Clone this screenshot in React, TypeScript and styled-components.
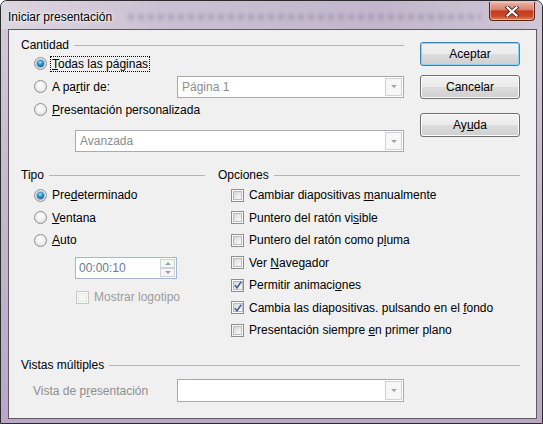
import React from "react";
import styled, { createGlobalStyle } from "styled-components";

const GlobalStyle = createGlobalStyle`
  html, body {
    margin: 0;
    padding: 0;
    background: #ffffff;
  }
  * {
    box-sizing: border-box;
  }
`;

const FONT = `"Liberation Sans", Arial, sans-serif`;

const Window = styled.div`
  width: 543px;
  height: 424px;
  border: 1px solid #2b2b2b;
  border-radius: 7px 7px 0 0;
  background: linear-gradient(to bottom, #d3cad9 0%, #c4b8cc 50%, #b8a8c5 100%);
  display: flex;
  flex-direction: column;
  font-family: ${FONT};
  font-size: 12px;
  color: #000;
  overflow: hidden;
`;

const TitleBar = styled.div`
  height: 28px;
  display: flex;
  align-items: flex-start;
  padding-left: 7px;
  background: linear-gradient(to right, #dcd6e0 0%, #cbc0d3 30%, #c3b6cc 70%, #d0c6d6 100%);
`;

const Title = styled.div`
  height: 28px;
  line-height: 28px;
  padding-top: 2px;
  text-shadow: 0 0 6px #ffffff, 0 0 3px #ffffff;
  white-space: nowrap;
`;

const Blur = styled.div`
  flex: 1;
  height: 14px;
  margin: 9px 8px 0 14px;
  background-image: radial-gradient(circle, rgba(100, 82, 122, 0.32) 0, rgba(100, 82, 122, 0) 5px);
  background-size: 10px 14px;
  filter: blur(1.6px);
`;

const CloseButton = styled.div`
  width: 46px;
  height: 19px;
  margin: 1px 7px 0 0;
  border: 1px solid #5a2418;
  border-top: none;
  border-radius: 0 0 4px 4px;
  background: linear-gradient(to bottom, #e9b1a4 0%, #dc8570 40%, #c43b1f 52%, #cc4b2b 80%, #e3895e 100%);
  box-shadow: inset 0 0 0 1px rgba(255, 210, 200, 0.55);
  display: flex;
  align-items: center;
  justify-content: center;
`;

const Client = styled.div`
  flex: 1;
  margin: 0 5px 4px 7px;
  border: 1px solid #5e5a63;
  background: #f0f0f0;
  padding: 7px 16px 0 12px;
  display: flex;
  flex-direction: column;
`;

const Row = styled.div<{ $gap?: number; $mt?: number }>`
  display: flex;
  gap: ${(p) => p.$gap ?? 0}px;
  margin-top: ${(p) => p.$mt ?? 0}px;
`;

const Group = styled.div<{ $w?: number }>`
  display: flex;
  flex-direction: column;
  width: ${(p) => (p.$w ? `${p.$w}px` : "auto")};
  flex: ${(p) => (p.$w ? "none" : 1)};
`;

const Header = styled.div`
  height: 15px;
  display: flex;
  align-items: center;
  gap: 5px;
  white-space: nowrap;
`;

const HeaderLine = styled.div`
  flex: 1;
  height: 1px;
  background: #b4b4b4;
  margin-top: 1px;
`;

const Items = styled.div<{ $mt?: number; $indent?: number }>`
  display: flex;
  flex-direction: column;
  margin-top: ${(p) => p.$mt ?? 0}px;
  padding-left: ${(p) => p.$indent ?? 13}px;
`;

const OptionRow = styled.div<{ $h?: number }>`
  height: ${(p) => p.$h ?? 22.5}px;
  display: flex;
  align-items: center;
  white-space: nowrap;
`;

const RadioCircle = styled.span<{ $checked?: boolean }>`
  width: 13px;
  height: 13px;
  flex: none;
  border-radius: 50%;
  border: 1px solid #8c8e90;
  background: radial-gradient(circle at 50% 40%, #ffffff 0%, #f1f1f1 45%, #d5d6d8 100%);
  display: flex;
  align-items: center;
  justify-content: center;
  margin-right: 4px;

  &::after {
    content: "";
    display: ${(p) => (p.$checked ? "block" : "none")};
    width: 7px;
    height: 7px;
    border-radius: 50%;
    background: radial-gradient(circle at 45% 35%, #b5ecff 0%, #2f9ad8 35%, #13558c 80%, #0d3e68 100%);
    box-shadow: 0 0 0 1px rgba(40, 80, 120, 0.35);
  }
`;

const Label = styled.span<{ $focus?: boolean; $disabled?: boolean }>`
  color: ${(p) => (p.$disabled ? "#9c9c9c" : "#000")};
  padding: 1px 1px;
  margin-left: -1px;
  border: 1px dotted ${(p) => (p.$focus ? "#000" : "transparent")};
  line-height: 12px;
`;

const Box = styled.span<{ $disabled?: boolean }>`
  width: 13px;
  height: 13px;
  flex: none;
  border: 1px solid ${(p) => (p.$disabled ? "#c7c7c7" : "#8c8e90")};
  padding: 1px;
  background: #fbfbfb;
  margin-right: 4px;
  display: flex;
`;

const BoxInner = styled.span<{ $disabled?: boolean }>`
  flex: 1;
  border: 1px solid ${(p) => (p.$disabled ? "#e6e6e6" : "#b9bbbe")};
  background: ${(p) =>
    p.$disabled ? "#f6f6f6" : "linear-gradient(135deg, #d4d5d7 0%, #ececed 55%, #fbfbfb 100%)"};
  display: flex;
  align-items: center;
  justify-content: center;
`;

const Combo = styled.div<{ $w?: number }>`
  width: ${(p) => (p.$w ? `${p.$w}px` : "auto")};
  flex: ${(p) => (p.$w ? "none" : 1)};
  height: 22px;
  border: 1px solid #a7abb0;
  background: #ffffff;
  display: flex;
  align-items: center;
  padding: 1px;
  color: #8d8d8d;
`;

const ComboText = styled.span`
  flex: 1;
  padding-left: 3px;
`;

const DropButton = styled.span`
  width: 17px;
  height: 100%;
  border: 1px solid #d3d3d3;
  background: #f7f7f7;
  display: flex;
  align-items: center;
  justify-content: center;

  &::after {
    content: "";
    border-left: 3px solid transparent;
    border-right: 3px solid transparent;
    border-top: 3px solid #a2a2a2;
  }
`;

const Spin = styled.div`
  width: 102px;
  height: 22px;
  border: 1px solid #a5b7d0;
  background: #ffffff;
  display: flex;
  align-items: center;
  padding: 1px 1px 1px 0;
  color: #6d7a8e;
`;

const SpinButtons = styled.div`
  width: 15px;
  height: 100%;
  display: flex;
  flex-direction: column;
`;

const SpinHalf = styled.span<{ $up?: boolean }>`
  flex: 1;
  border: 1px solid #cfd3d8;
  background: #f6f6f6;
  display: flex;
  align-items: center;
  justify-content: center;

  &::after {
    content: "";
    border-left: 3px solid transparent;
    border-right: 3px solid transparent;
    ${(p) => (p.$up ? "border-bottom: 3px solid #a0a0a0;" : "border-top: 3px solid #a0a0a0;")}
  }
`;

const ButtonColumn = styled.div`
  width: 100px;
  display: flex;
  flex-direction: column;
  padding-top: 5px;
`;

const Button = styled.button<{ $default?: boolean; $mt?: number }>`
  width: 100px;
  height: 24px;
  margin-top: ${(p) => p.$mt ?? 0}px;
  font-family: ${FONT};
  font-size: 12px;
  color: #000;
  border: 1px solid ${(p) => (p.$default ? "#3c7fb1" : "#707070")};
  border-radius: 3px;
  background: linear-gradient(to bottom, #f2f2f2 0%, #ebebeb 49%, #dddddd 50%, #cfcfcf 100%);
  box-shadow: inset 0 0 0 1px ${(p) => (p.$default ? "#8fd3f5" : "#fbfbfb")};
  padding: 0;
`;

const GreyText = styled.span`
  color: #8e8e8e;
  width: 144px;
  white-space: nowrap;
`;

function Radio({ checked, children, focus }: { checked?: boolean; children: React.ReactNode; focus?: boolean }) {
  return (
    <>
      <RadioCircle $checked={checked} />
      <Label $focus={focus}>{children}</Label>
    </>
  );
}

function Check({
  checked,
  disabled,
  children,
}: {
  checked?: boolean;
  disabled?: boolean;
  children: React.ReactNode;
}) {
  return (
    <>
      <Box $disabled={disabled}>
        <BoxInner $disabled={disabled}>
          {checked && (
            <svg width="8" height="8" viewBox="0 0 8 8">
              <path d="M0.8 4.2 L3 6.8 L7.2 0.8" fill="none" stroke="#4a5e99" strokeWidth="1.6" />
            </svg>
          )}
        </BoxInner>
      </Box>
      <Label $disabled={disabled}>{children}</Label>
    </>
  );
}

export default function App() {
  return (
    <>
      <GlobalStyle />
      <Window>
        <TitleBar>
          <Title>Iniciar presentación</Title>
          <Blur />
          <CloseButton>
            <svg width="14" height="11" viewBox="0 0 14 11">
              <path d="M2.5 1.5 L11.5 9.5 M11.5 1.5 L2.5 9.5" stroke="#4a2a24" strokeWidth="4" strokeLinecap="square" />
              <path d="M2.5 1.5 L11.5 9.5 M11.5 1.5 L2.5 9.5" stroke="#ffffff" strokeWidth="2.2" strokeLinecap="square" />
            </svg>
          </CloseButton>
        </TitleBar>
        <Client>
          <Row $gap={16}>
            <Group>
              <Header>
                Cantidad
                <HeaderLine />
              </Header>
              <Items>
                <OptionRow $h={23}>
                  <Radio checked focus>
                    <u>T</u>odas las páginas
                  </Radio>
                </OptionRow>
                <OptionRow $h={23}>
                  <Radio>
                    A pa<u>r</u>tir de:
                  </Radio>
                  <span style={{ flex: 1 }} />
                  <Combo $w={227}>
                    <ComboText>Página 1</ComboText>
                    <DropButton />
                  </Combo>
                </OptionRow>
                <OptionRow $h={23}>
                  <Radio>
                    <u>P</u>resentación personalizada
                  </Radio>
                </OptionRow>
                <Row $mt={9} style={{ paddingLeft: 41 }}>
                  <Combo>
                    <ComboText>Avanzada</ComboText>
                    <DropButton />
                  </Combo>
                </Row>
              </Items>
            </Group>
            <ButtonColumn>
              <Button $default>Aceptar</Button>
              <Button $mt={9}>Cancelar</Button>
              <Button $mt={14}>
                Ay<u>u</u>da
              </Button>
            </ButtonColumn>
          </Row>

          <Row $gap={13} $mt={15}>
            <Group $w={184}>
              <Header>
                Tipo
                <HeaderLine />
              </Header>
              <Items $mt={2}>
                <OptionRow>
                  <Radio checked>
                    Pre<u>d</u>eterminado
                  </Radio>
                </OptionRow>
                <OptionRow>
                  <Radio>
                    <u>V</u>entana
                  </Radio>
                </OptionRow>
                <OptionRow>
                  <Radio>
                    <u>A</u>uto
                  </Radio>
                </OptionRow>
                <Row $mt={5.5} style={{ paddingLeft: 41 }}>
                  <Spin>
                    <ComboText>00:00:10</ComboText>
                    <SpinButtons>
                      <SpinHalf $up />
                      <SpinHalf />
                    </SpinButtons>
                  </Spin>
                </Row>
                <OptionRow $h={22} style={{ marginTop: 7, paddingLeft: 42 }}>
                  <Check disabled>Mostrar logotipo</Check>
                </OptionRow>
              </Items>
            </Group>
            <Group>
              <Header>
                Opciones
                <HeaderLine />
              </Header>
              <Items $mt={2}>
                <OptionRow>
                  <Check>
                    Cambiar diapositivas <u>m</u>anualmente
                  </Check>
                </OptionRow>
                <OptionRow>
                  <Check>
                    Puntero del ratón vi<u>s</u>ible
                  </Check>
                </OptionRow>
                <OptionRow>
                  <Check>
                    Puntero del ratón como p<u>l</u>uma
                  </Check>
                </OptionRow>
                <OptionRow>
                  <Check>
                    Ver <u>N</u>avegador
                  </Check>
                </OptionRow>
                <OptionRow>
                  <Check checked>
                    Permitir animaci<u>o</u>nes
                  </Check>
                </OptionRow>
                <OptionRow>
                  <Check checked>
                    Cambia las diapositivas. pulsando en el <u>f</u>ondo
                  </Check>
                </OptionRow>
                <OptionRow>
                  <Check>
                    Presentación siempre <u>e</u>n primer plano
                  </Check>
                </OptionRow>
              </Items>
            </Group>
          </Row>

          <Group style={{ marginTop: 15.5, flex: "none" }}>
            <Header>
              Vistas múltiples
              <HeaderLine />
            </Header>
            <Row $mt={7} style={{ paddingLeft: 12, alignItems: "center" }}>
              <GreyText>
                Vista de p<u>r</u>esentación
              </GreyText>
              <Combo $w={227} style={{ height: 23 }}>
                <ComboText />
                <DropButton />
              </Combo>
            </Row>
          </Group>
        </Client>
      </Window>
    </>
  );
}
